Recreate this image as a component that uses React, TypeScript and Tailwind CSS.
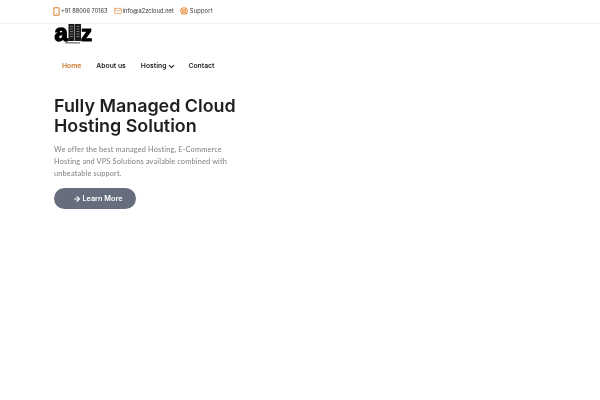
import { ArrowRight, ChevronDown, LifeBuoy, Mail, Smartphone } from "lucide-react";

function Logo() {
  return (
    <svg width="42" height="40" viewBox="0 0 42 40" className="-mb-[4px] block">
      <text x="0.5" y="33" fontFamily="'Liberation Sans', sans-serif" fontWeight="700" fontSize="24" fill="#000" stroke="#000" strokeWidth="1.4">a</text>
      <rect x="14.500" y="16" width="6" height="17" fill="#1a1a1a" />
      <rect x="21" y="16" width="6" height="17" fill="#1a1a1a" />
      <path d="M16 18.500h3M16 21h3M16 23.500h3M16 26h3M16 28.500h3M22.500 18.500h3M22.500 21h3M22.500 23.500h3M22.500 26h3M22.500 28.500h3" stroke="#9a9a9a" strokeWidth="0.7" />
      <text x="27" y="33" fontFamily="'Liberation Sans', sans-serif" fontWeight="700" fontSize="22" fill="#000" stroke="#000" strokeWidth="1.2">z</text>
      <rect x="11" y="34.200" width="15" height="1.300" fill="#777" />
    </svg>
  );
}

export default function App() {
  return (
    <div className="h-[400px] w-[600px] overflow-hidden bg-white font-['Inter',sans-serif] antialiased will-change-transform">
      <div className="flex h-6 items-center border-b border-[#f0f0f0] pl-[52px] text-[5.7px] text-[#333]">
        <span className="flex items-center">
          <Smartphone size={9} strokeWidth={2.8} className="text-[#d9822b]" />
          +91 88006 70163
        </span>
        <span className="ml-[6px] flex items-center gap-[1px]">
          <Mail size={8} strokeWidth={2.2} className="text-[#e8944a]" />
          <span className="tracking-[0.05px]">info@a2zcloud.net</span>
        </span>
        <span className="ml-[6px] flex items-center gap-[2px]">
          <LifeBuoy size={8} strokeWidth={3.2} className="text-[#e8944a]" />
          <span className="tracking-[0.2px]">Support</span>
        </span>
      </div>
      <div className="-mt-[16px] pl-[54px]">
        <Logo />
      </div>
      <nav className="mt-[18px] flex h-[9px] items-center pl-[62px] text-[6.8px] font-semibold text-[#222]">
        <span className="text-[#c8752b]">Home</span>
        <span className="ml-[15px]">About us</span>
        <span className="ml-[15px] flex items-center gap-[1px]">
          Hosting
          <ChevronDown size={9} strokeWidth={3} />
        </span>
        <span className="ml-[12px]">Contact</span>
      </nav>
      <div className="pl-[54px] pt-[25px]">
        <h1 className="w-[200px] text-[17.9px] font-semibold leading-[20px] text-[#1f1f1f]">
          Fully Managed Cloud
          <br />
          Hosting Solution
        </h1>
        <p className="mt-[8px] w-[190px] font-['Lato',sans-serif] text-[7.4px] leading-[12px] tracking-[0.15px] text-[#808080]">
          We offer the best managed Hosting, E-Commerce
          <br />
          Hosting and VPS Solutions available combined with
          <br />
          unbeatable support.
        </p>
        <div className="mt-[8px] flex h-[21px] w-[82px] items-center justify-center gap-[1px] rounded-full bg-[#666d7c] pl-[6px] pt-[1px] text-[7.3px] font-semibold text-white">
          <ArrowRight size={8} strokeWidth={3.4} />
          Learn More
        </div>
      </div>
    </div>
  );
}
